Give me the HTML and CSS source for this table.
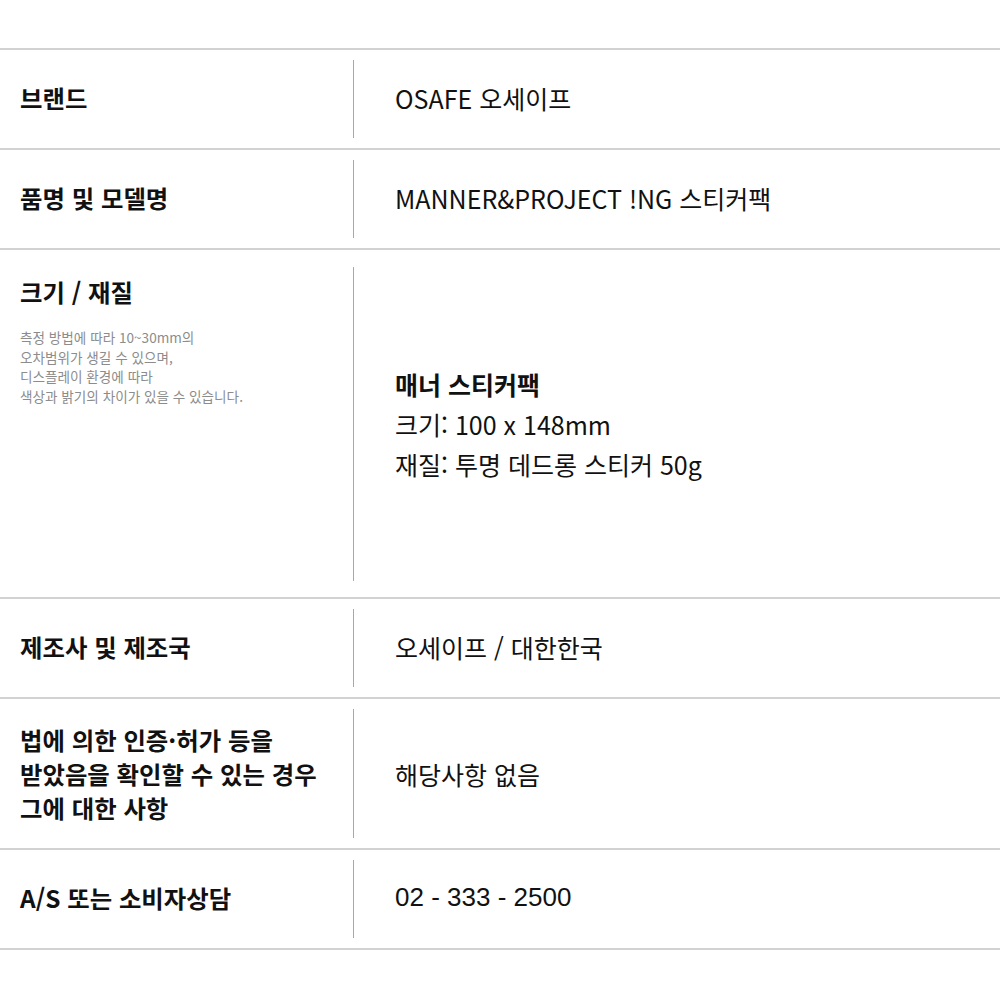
FILE: index.html
```html
<!DOCTYPE html>
<html lang="ko">
<head>
<meta charset="utf-8">
<link rel="stylesheet" href="styles.css">
</head>
<body>
<div class="table">
  <div class="row">
    <div class="label"><span>브랜드</span></div>
    <div class="value">OSAFE 오세이프</div>
  </div>
  <div class="row">
    <div class="label"><span>품명 및 모델명</span></div>
    <div class="value">MANNER&amp;PROJECT !NG 스티커팩</div>
  </div>
  <div class="row row-tall">
    <div class="label label-top">
      <div class="title">크기 / 재질</div>
      <p class="note">측정 방법에 따라 10~30mm의<br>오차범위가 생길 수 있으며,<br>디스플레이 환경에 따라<br>색상과 밝기의 차이가 있을 수 있습니다.</p>
    </div>
    <div class="value value-lines">
      <div class="strong">매너 스티커팩</div>
      <div>크기: 100 x 148mm</div>
      <div>재질: 투명 데드롱 스티커 50g</div>
    </div>
  </div>
  <div class="row">
    <div class="label"><span>제조사 및 제조국</span></div>
    <div class="value">오세이프 / 대한한국</div>
  </div>
  <div class="row row-multi">
    <div class="label label-multi"><span>법에 의한 인증·허가 등을<br>받았음을 확인할 수 있는 경우<br>그에 대한 사항</span></div>
    <div class="value">해당사항 없음</div>
  </div>
  <div class="row">
    <div class="label"><span>A/S 또는 소비자상담</span></div>
    <div class="value phone">02 - 333 - 2500</div>
  </div>
</div>
</body>
</html>
```

FILE: styles.css
```css
html, body {
  margin: 0;
  padding: 0;
  background: #fff;
}
body {
  font-family: "Noto Sans CJK KR", "Noto Sans", sans-serif;
  color: #111;
}
.table {
  padding-top: 48px;
}
.row {
  display: flex;
  border-top: 2px solid #d2d2d2;
  padding: 10px 0;
  height: 78px;
}
.row:last-child {
  border-bottom: 2px solid #d2d2d2;
}
.label {
  width: 333px;
  padding-left: 20px;
  padding-bottom: 3px;
  box-sizing: content-box;
  border-right: 1px solid #a8a8a8;
  display: flex;
  align-items: center;
  font-weight: 700;
  font-size: 24.4px;
}
.value {
  flex: 1;
  padding-left: 41px;
  padding-bottom: 3px;
  display: flex;
  align-items: center;
  font-size: 25px;
  font-weight: 400;
}
.row-tall {
  height: 314px;
  padding: 17px 0 16px;
}
.row-tall .label,
.row-tall .value {
  padding-bottom: 0;
}
.label-top {
  flex-direction: column;
  align-items: flex-start;
  justify-content: flex-start;
  padding-top: 10px;
}
.title {
  line-height: 30px;
}
.note {
  margin: 21px 0 0;
  font-size: 13.6px;
  font-weight: 400;
  color: #8c8c8c;
  line-height: 19.7px;
}
.value-lines {
  flex-direction: column;
  align-items: flex-start;
  justify-content: center;
  line-height: 40px;
}
.strong {
  font-weight: 700;
}
.row-multi {
  height: 129px;
}
.row-multi .label,
.row-multi .value {
  padding-bottom: 0;
}
.label-multi {
  line-height: 34px;
}
.phone {
  font-family: "Liberation Sans", Arial, sans-serif;
  font-size: 26px;
}
```
